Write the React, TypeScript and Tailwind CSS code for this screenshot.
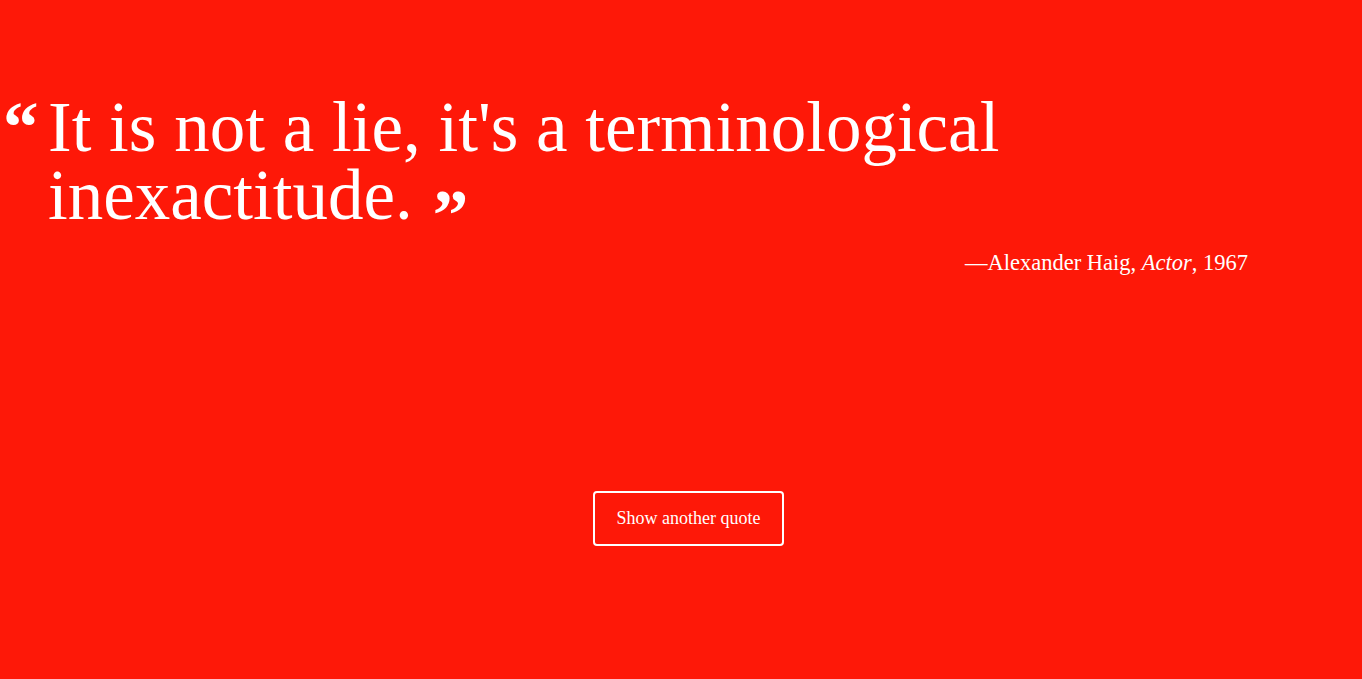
export default function App() {
  return (
    <div className="min-h-screen w-full bg-[#fe1808] text-white font-['Liberation_Serif',serif]">
      <div className="pt-[93px] pl-[3px] w-[1248px]">
        <div className="flex items-start">
          <span className="w-[45px] shrink-0 text-[71px] leading-[68px] font-bold">&ldquo;</span>
          <div className="flex-1">
            <blockquote className="text-[71px] leading-[68px]">
              It is not a lie, it's a terminological inexactitude.
              <span className="relative top-[20px] ml-[20px] font-bold">&rdquo;</span>
            </blockquote>
            <p className="mt-5 text-right text-[22.5px] leading-[28px]">
              &mdash;Alexander Haig, <i>Actor</i>, 1967
            </p>
          </div>
        </div>
      </div>

      <div className="mt-[214px] flex justify-center pl-[15px]">
        <button className="border-2 border-white rounded-[4px] px-[22px] py-[12px] text-[18px] leading-[27px] text-white">
          Show another quote
        </button>
      </div>
    </div>
  );
}
